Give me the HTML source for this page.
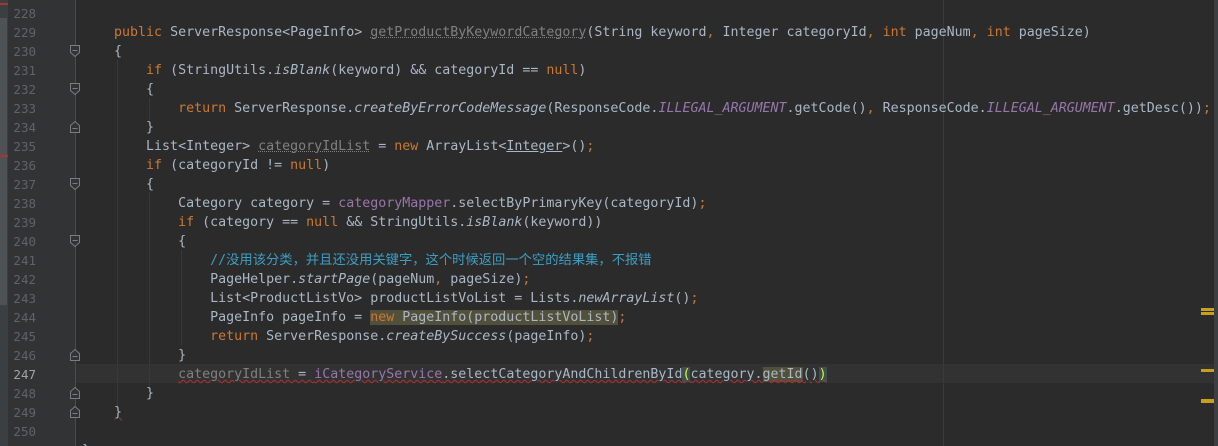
<!DOCTYPE html>
<html style="overflow:hidden;height:446px"><head><meta charset="utf-8"><style>
body{margin:0;width:1218px;height:446px;background:#2b2b2b;overflow:hidden;position:relative;font-family:"DejaVu Sans Mono","Liberation Mono","Noto Sans CJK SC",monospace;font-size:13.3px;}
.strip{position:absolute;left:0;top:0;width:8px;height:446px;background:#3c3f41}
.thumb{position:absolute;left:0;top:18px;width:7px;height:287px;background:#4e5254}
.red{position:absolute;left:0;width:8px;height:2px;background:#a33}
.gut{position:absolute;left:8px;top:0;width:67px;height:446px;background:#313335}
.gl{position:absolute;left:75px;top:0;width:1px;height:446px;background:#4a4c4e}
.cur{position:absolute;left:76px;top:364px;width:1138px;height:19px;background:#323232}
.curg{position:absolute;left:8px;top:364px;width:67px;height:19px;background:#313335}
.ln{position:absolute;left:8px;width:28px;text-align:right;color:#606366;height:19px;line-height:19px;font-size:12.5px;margin-top:1px}
.code{position:absolute;left:82px;height:19px;line-height:19px;white-space:pre;color:#a9b7c6;margin-top:1px}
.k{color:#cc7832}.i{font-style:italic}.p{color:#9876aa}.u{color:#808080;text-decoration:underline dotted #808080;text-decoration-thickness:1px}
.c{color:#3d9dc3}.hl{background:#52503a}.bm{background:#3b514d;color:#e8e83a}
.wr{text-decoration:underline wavy #b03030;text-decoration-thickness:1px}
.guide{position:absolute;width:1px;background:#393939}
.margin{position:absolute;left:943px;top:0;width:1px;height:446px;background:#3a3a3a}
.sb{position:absolute;left:1214px;top:0;width:4px;height:446px;background:#3c3f41}
.mk{position:absolute;left:1201px;width:13px;height:3px;background:#c8a01c}
svg.f{position:absolute;left:69px}
</style></head><body>
<div class="strip"><div class="thumb"></div><div class="red" style="top:3px"></div><div class="red" style="top:155px"></div></div>
<div class="gut"></div>
<div class="cur"></div><div class="curg"></div>
<div class="gl"></div>
<div class="margin"></div>
<div class="guide" style="left:117px;top:60px;height:348px"></div>
<div class="guide" style="left:149px;top:98px;height:22px"></div>
<div class="guide" style="left:149px;top:193px;height:193px"></div>
<div class="guide" style="left:181px;top:250px;height:95px"></div>

<div class="ln" style="top:3px">228</div>
<div class="ln" style="top:22px">229</div>
<div class="ln" style="top:41px">230</div>
<div class="ln" style="top:60px">231</div>
<div class="ln" style="top:79px">232</div>
<div class="ln" style="top:98px">233</div>
<div class="ln" style="top:117px">234</div>
<div class="ln" style="top:136px">235</div>
<div class="ln" style="top:155px">236</div>
<div class="ln" style="top:174px">237</div>
<div class="ln" style="top:193px">238</div>
<div class="ln" style="top:212px">239</div>
<div class="ln" style="top:231px">240</div>
<div class="ln" style="top:250px">241</div>
<div class="ln" style="top:269px">242</div>
<div class="ln" style="top:288px">243</div>
<div class="ln" style="top:307px">244</div>
<div class="ln" style="top:326px">245</div>
<div class="ln" style="top:345px">246</div>
<div class="ln" style="top:364px;color:#a4a3a3">247</div>
<div class="ln" style="top:383px">248</div>
<div class="ln" style="top:402px">249</div>
<div class="ln" style="top:421px">250</div>
<div class="ln" style="top:440px">251</div>

<svg class="f" style="top:44px" width="12" height="14"><path d="M1.5 1.5h9v7l-4.5 4-4.5-4z" fill="#313335" stroke="#7a7d80"/><path d="M3.5 6.5h5" stroke="#7a7d80"/></svg>
<svg class="f" style="top:82px" width="12" height="14"><path d="M1.5 1.5h9v7l-4.5 4-4.5-4z" fill="#313335" stroke="#7a7d80"/><path d="M3.5 6.5h5" stroke="#7a7d80"/></svg>
<svg class="f" style="top:120px" width="12" height="14"><path d="M1.5 12.5h9v-7l-4.5-4-4.5 4z" fill="#313335" stroke="#7a7d80"/><path d="M3.5 8.5h5" stroke="#7a7d80"/></svg>
<svg class="f" style="top:177px" width="12" height="14"><path d="M1.5 1.5h9v7l-4.5 4-4.5-4z" fill="#313335" stroke="#7a7d80"/><path d="M3.5 6.5h5" stroke="#7a7d80"/></svg>
<svg class="f" style="top:234px" width="12" height="14"><path d="M1.5 1.5h9v7l-4.5 4-4.5-4z" fill="#313335" stroke="#7a7d80"/><path d="M3.5 6.5h5" stroke="#7a7d80"/></svg>
<svg class="f" style="top:348px" width="12" height="14"><path d="M1.5 12.5h9v-7l-4.5-4-4.5 4z" fill="#313335" stroke="#7a7d80"/><path d="M3.5 8.5h5" stroke="#7a7d80"/></svg>
<svg class="f" style="top:386px" width="12" height="14"><path d="M1.5 12.5h9v-7l-4.5-4-4.5 4z" fill="#313335" stroke="#7a7d80"/><path d="M3.5 8.5h5" stroke="#7a7d80"/></svg>
<svg class="f" style="top:405px" width="12" height="14"><path d="M1.5 12.5h9v-7l-4.5-4-4.5 4z" fill="#313335" stroke="#7a7d80"/><path d="M3.5 8.5h5" stroke="#7a7d80"/></svg>

<div class="code" style="top:22px">    <span class="k">public</span> ServerResponse&lt;PageInfo&gt; <span class="u">getProductByKeywordCategory</span>(String keyword<span class="k">,</span> Integer categoryId<span class="k">, int</span> pageNum<span class="k">, int</span> pageSize)</div>
<div class="code" style="top:41px">    {</div>
<div class="code" style="top:60px">        <span class="k">if</span> (StringUtils.<span class="i">isBlank</span>(keyword) &amp;&amp; categoryId == <span class="k">null</span>)</div>
<div class="code" style="top:79px">        {</div>
<div class="code" style="top:98px">            <span class="k">return</span> ServerResponse.<span class="i">createByErrorCodeMessage</span>(ResponseCode.<span class="p i">ILLEGAL_ARGUMENT</span>.getCode()<span class="k">,</span> ResponseCode.<span class="p i">ILLEGAL_ARGUMENT</span>.getDesc())<span class="k">;</span></div>
<div class="code" style="top:117px">        }</div>
<div class="code" style="top:136px">        List&lt;Integer&gt; <span class="u">categoryIdList</span> = <span class="k">new</span> ArrayList&lt;<span style="text-decoration:underline">Integer</span>&gt;()<span class="k">;</span></div>
<div class="code" style="top:155px">        <span class="k">if</span> (categoryId != <span class="k">null</span>)</div>
<div class="code" style="top:174px">        {</div>
<div class="code" style="top:193px">            Category category = <span class="p">categoryMapper</span>.selectByPrimaryKey(categoryId)<span class="k">;</span></div>
<div class="code" style="top:212px">            <span class="k">if</span> (category == <span class="k">null</span> &amp;&amp; StringUtils.<span class="i">isBlank</span>(keyword))</div>
<div class="code" style="top:231px">            {</div>
<div class="code" style="top:250px">                <span class="c">//没用该分类，并且还没用关键字，这个时候返回一个空的结果集，不报错</span></div>
<div class="code" style="top:269px">                PageHelper.<span class="i">startPage</span>(pageNum<span class="k">,</span> pageSize)<span class="k">;</span></div>
<div class="code" style="top:288px">                List&lt;ProductListVo&gt; productListVoList = Lists.<span class="i">newArrayList</span>()<span class="k">;</span></div>
<div class="code" style="top:307px">                PageInfo pageInfo = <span class="hl"><span class="k">new</span> PageInfo(productListVoList)</span><span class="k">;</span></div>
<div class="code" style="top:326px">                <span class="k">return</span> ServerResponse.<span class="i">createBySuccess</span>(pageInfo)<span class="k">;</span></div>
<div class="code" style="top:345px">            }</div>
<div class="code" style="top:364px">            <span class="wr"><span style="color:#808080">categoryIdList</span> = <span class="p">iCategoryService</span>.selectCategoryAndChildrenById<span class="bm">(</span>category.<span class="hl">getId</span>()<span class="bm">)</span></span></div>
<div class="code" style="top:383px">        }</div>
<div class="code" style="top:402px">    <span class="wr">}</span></div>
<div class="code" style="top:440px">}</div>

<div class="sb"></div>
<div class="mk" style="top:308px"></div><div class="mk" style="top:312px"></div>
<div class="mk" style="top:369px"></div>
<div class="mk" style="top:399px;height:4px"></div>
</body></html>
